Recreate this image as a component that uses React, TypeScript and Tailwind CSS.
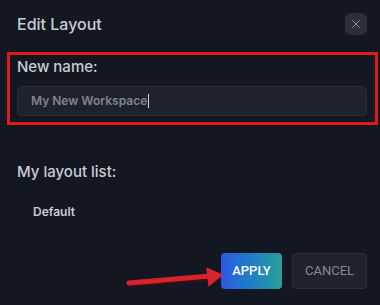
import { X } from "lucide-react";

export default function App() {
  return (
    <div className="relative h-[305px] w-[380px] overflow-hidden bg-[#131722] font-['Inter',sans-serif]">
      <div className="flex items-center justify-between pl-[17px] pr-[13px] pt-[13px]">
        <h2 className="text-[16px] font-medium leading-[22px] text-[#c9ccd3]">Edit Layout</h2>
        <button className="flex h-[22px] w-[22px] items-center justify-center rounded-md bg-[#2a2e39] text-[#9598a1]">
          <X size={14} strokeWidth={1.5} />
        </button>
      </div>

      <div className="ml-[7px] mr-[2px] mt-[17px] border-[3px] border-[#e01a1a] pb-[6px] pl-[7px] pr-[8px] pt-[3px]">
        <label className="block text-[15px] font-medium leading-[18px] text-[#c9ccd3]">New name:</label>
        <div className="mt-[10px] flex h-[30px] items-center rounded-[4px] border border-[#2a2e39] bg-[#1e222d] pl-[13px]">
          <span className="text-[12px] font-semibold text-[#80848f]">My New Workspace</span>
          <span className="ml-px h-[14px] w-px bg-[#d1d4dc]" />
        </div>
      </div>

      <div className="mt-[38px] pl-[17px]">
        <h3 className="text-[15px] font-medium leading-[18px] text-[#c9ccd3]">My layout list:</h3>
        <div className="mt-[23px] pl-[16px] text-[12px] font-semibold leading-[16px] text-[#c9ccd3]">Default</div>
      </div>

      <div className="mt-[33px] flex justify-end gap-[10px] pr-[13px]">
        <button className="h-[36px] w-[61px] rounded-[4px] bg-gradient-to-r from-[#2e55e6] to-[#2a9d9a] font-['Roboto',sans-serif] text-[13px] font-medium text-white">
          APPLY
        </button>
        <button className="h-[36px] w-[75px] rounded-[4px] border border-[#2a2e39] bg-[#1e222d] font-['Roboto',sans-serif] text-[13px] text-[#868993]">
          CANCEL
        </button>
      </div>

      <svg className="absolute left-[124px] top-[265px]" width="102" height="24" viewBox="0 0 102 24">
        <path d="M5 18.5 L86 11.5" stroke="#5a0d10" strokeWidth="6" strokeLinecap="round" opacity="0.5" transform="translate(1 1)" />
        <path d="M5 18 L86 11" stroke="#d8232a" strokeWidth="5" strokeLinecap="round" />
        <path d="M83 3.5 L98 10 L85 20.5 Z" fill="#d8232a" stroke="#d8232a" strokeWidth="1.5" strokeLinejoin="round" />
      </svg>
    </div>
  );
}
